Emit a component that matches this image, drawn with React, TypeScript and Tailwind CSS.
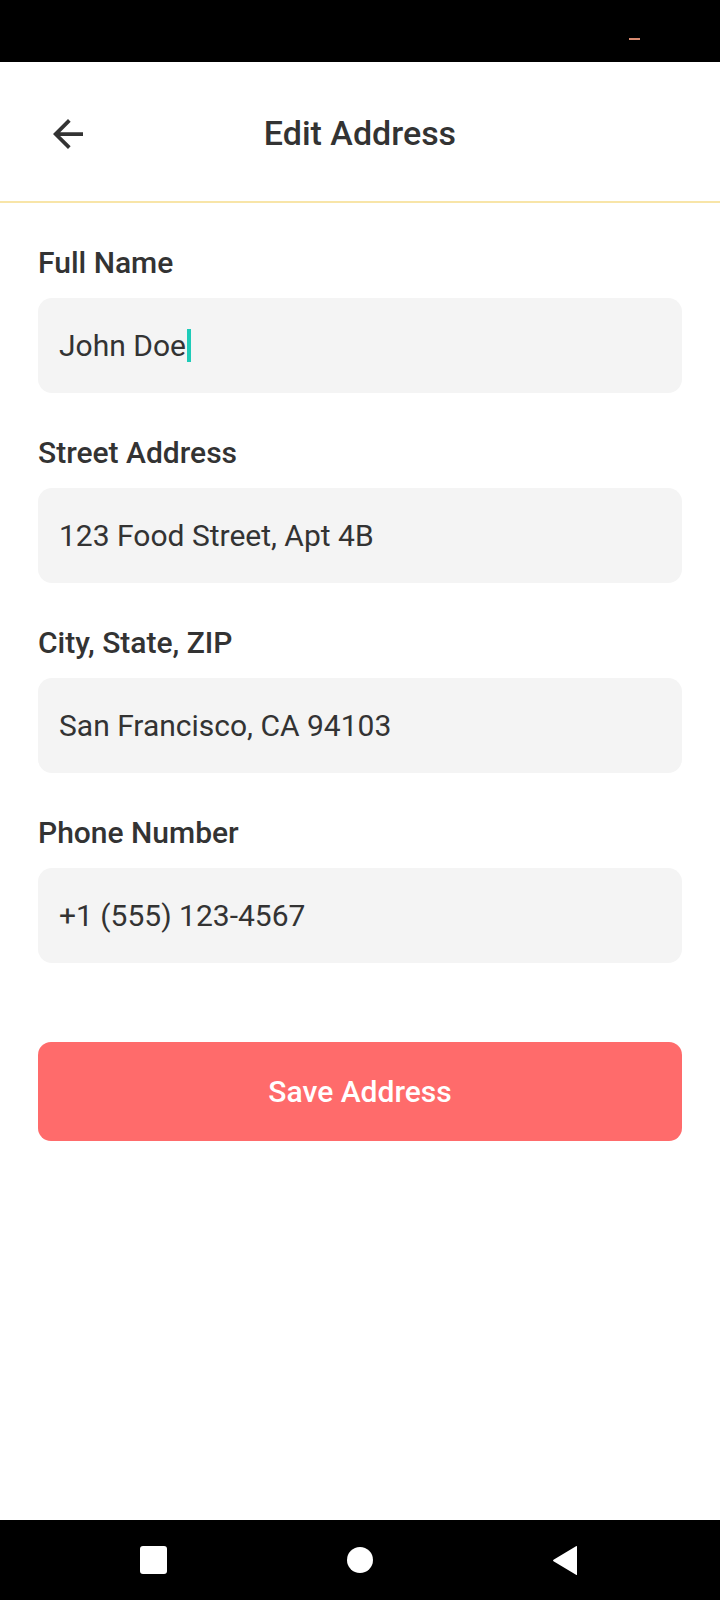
import React, { useState } from 'react';

interface FieldProps {
  label: string;
  value: string;
  focused?: boolean;
  onChange: (v: string) => void;
}

function Field({ label, value, focused, onChange }: FieldProps) {
  return (
    <div className="flex flex-col">
      <label className="text-[30px] leading-[34px] font-medium text-[#333333]">{label}</label>
      <div className="mt-[18px] h-[95px] rounded-[14px] bg-[#f4f4f4] px-[21px] flex items-center">
        {focused ? (
          // focused field: draw the text cursor right after the value
          <div className="flex items-center text-[30px] text-[#333333]">
            <span>{value}</span>
            <span className="ml-px w-[4px] h-[33px] bg-[#1ecbb8]" />
          </div>
        ) : (
          <input
            value={value}
            onChange={(e) => onChange(e.target.value)}
            className="w-full bg-transparent outline-none text-[30px] text-[#333333]"
          />
        )}
      </div>
    </div>
  );
}

export default function App() {
  const [name, setName] = useState('John Doe');
  const [street, setStreet] = useState('123 Food Street, Apt 4B');
  const [city, setCity] = useState('San Francisco, CA 94103');
  const [phone, setPhone] = useState('+1 (555) 123-4567');

  return (
    <div className="w-[720px] h-[1600px] bg-white flex flex-col font-['Roboto',sans-serif]">
      {/* status bar */}
      <div className="h-[62px] bg-black flex items-start justify-end pr-[80px] pt-[38px]">
        <div className="w-[11px] h-[2px] bg-[#d88a70]" />
      </div>

      {/* header */}
      <div className="h-[141px] border-b-2 border-[#f8e5a8] flex items-center px-[51px] pt-[4px]">
        <button className="w-[34px] h-[32px] flex items-center justify-center text-[#333333]">
          <svg width="32" height="30" viewBox="4 4 16 16" fill="currentColor">
            <path d="M20 11H7.83l5.59-5.59L12 4l-8 8 8 8 1.41-1.41L7.83 13H20v-2z" />
          </svg>
        </button>
        <h1 className="flex-1 text-center text-[34px] font-medium text-[#333333] pr-[34px]">Edit Address</h1>
      </div>

      {/* form */}
      <div className="flex flex-col px-[38px] pt-[43px] gap-[43px]">
        <Field label="Full Name" value={name} focused onChange={setName} />
        <Field label="Street Address" value={street} onChange={setStreet} />
        <Field label="City, State, ZIP" value={city} onChange={setCity} />
        <Field label="Phone Number" value={phone} onChange={setPhone} />
      </div>

      <div className="px-[38px] mt-[79px]">
        <button className="w-full h-[99px] rounded-[13px] bg-[#ff6b6b] text-white text-[30px] font-medium">
          Save Address
        </button>
      </div>

      <div className="flex-1" />

      {/* nav bar */}
      <div className="h-[80px] bg-black flex items-center">
        <div className="w-full flex items-center justify-between pl-[140px] pr-[142px]">
          <div className="w-[27px] h-[28px] rounded-[3px] bg-white" />
          <div className="w-[26px] h-[26px] rounded-full bg-white" />
          <svg width="26" height="31" viewBox="0 0 26 31">
            <path d="M25 1.5 L25 29.5 Q25 30.5 24 29.8 L1.5 16.2 Q0.5 15.5 1.5 14.8 L24 1.2 Q25 0.5 25 1.5 Z" fill="white" />
          </svg>
        </div>
      </div>
    </div>
  );
}
